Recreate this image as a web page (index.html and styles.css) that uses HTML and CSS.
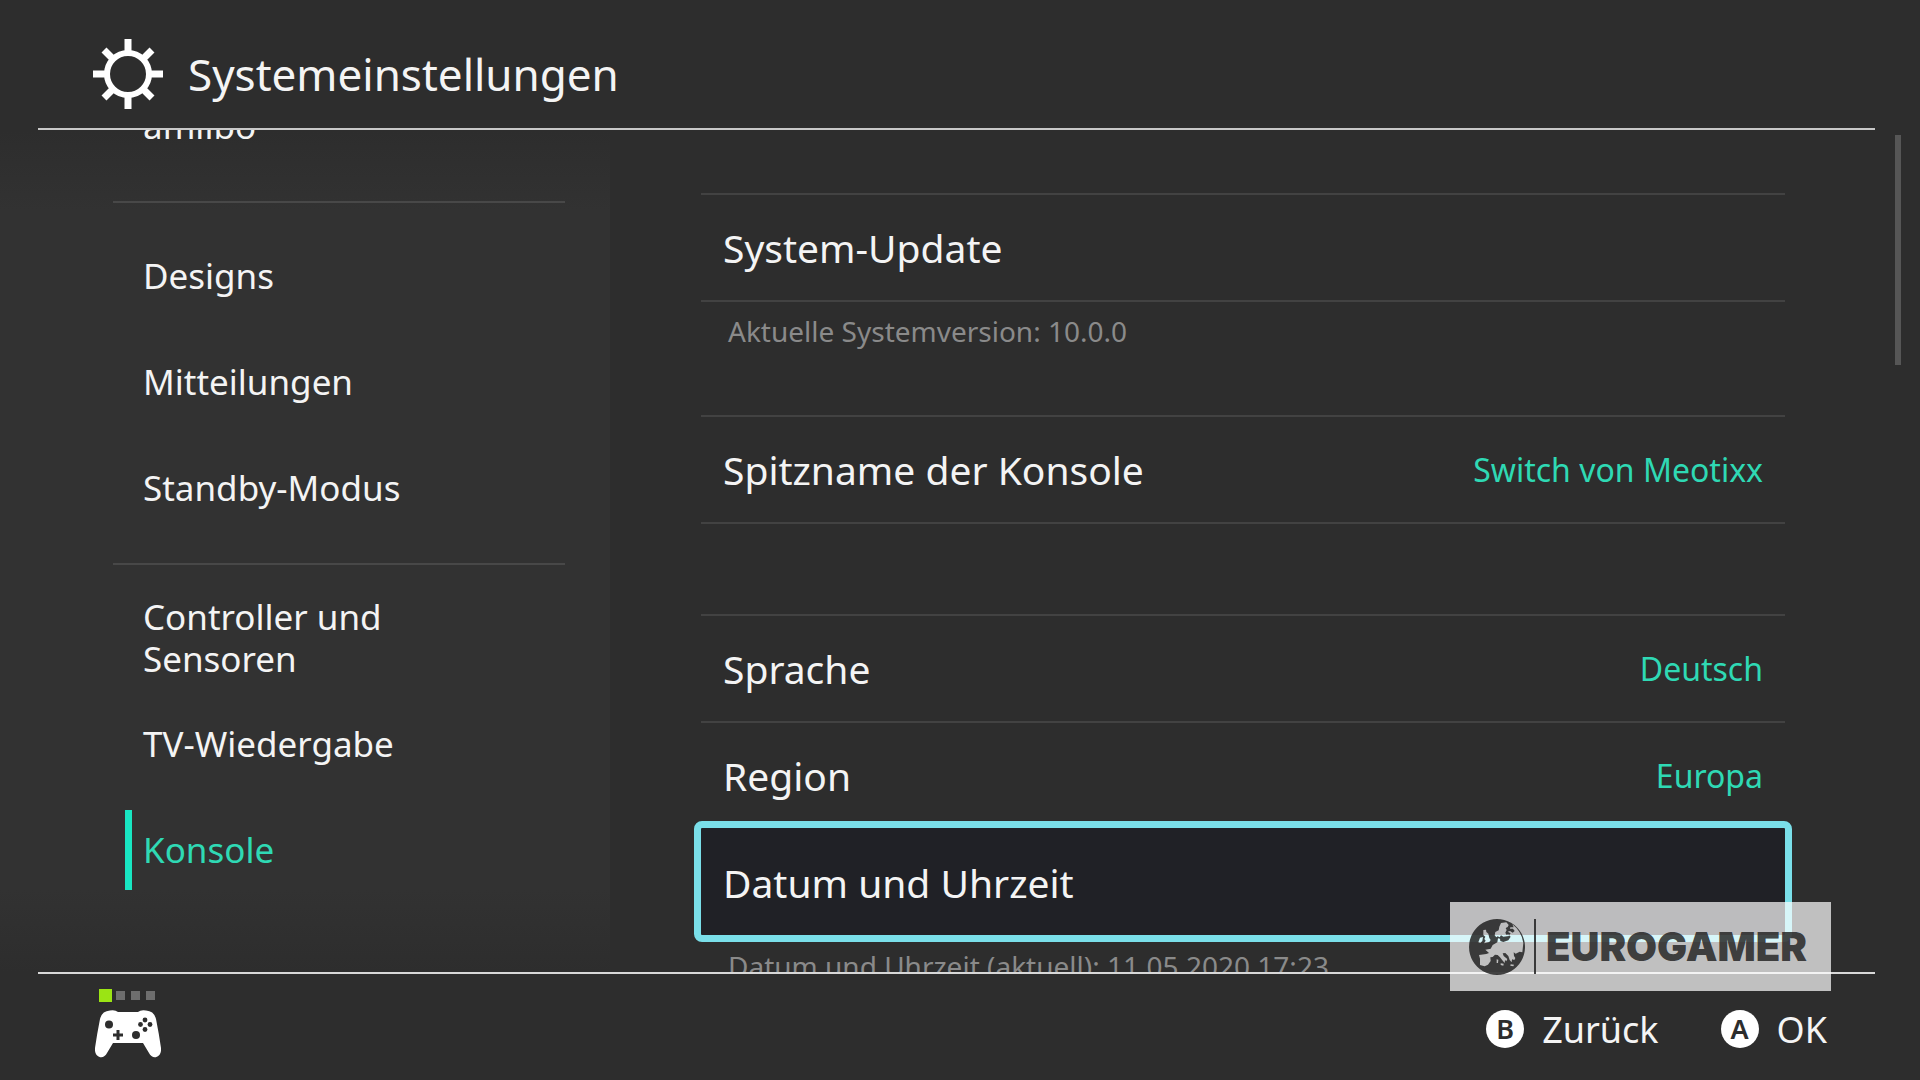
FILE: index.html
```html
<!DOCTYPE html>
<html lang="de">

<head>
    <meta charset="UTF-8">
    <meta name="viewport" content="width=device-width, initial-scale=1.0">
    <title>Systemeinstellungen</title>
    <link rel="stylesheet" href="styles.css">
</head>

<body>
    <header class="header">
        <svg class="gear" viewBox="-35 -35 70 70" aria-hidden="true">
            <circle r="21" fill="none" stroke="#fff" stroke-width="6"/>
            <g stroke="#fff" stroke-width="7">
                <path d="M0-35V-22M0 35V22M-35 0H-22M35 0H22"/>
                <path d="M-24-24L-16-16M24-24L16-16M-24 24L-16 16M24 24L16 16"/>
            </g>
        </svg>
        <h1>Systemeinstellungen</h1>
    </header>

    <div class="content">
        <nav class="sidebar">
            <div class="menu">
                <a href="#amiibo">amiibo</a>
                <hr>
                <a href="#designs">Designs</a>
                <a href="#mitteilungen">Mitteilungen</a>
                <a href="#standby">Standby-Modus</a>
                <hr>
                <a href="#controller">Controller und Sensoren</a>
                <a href="#tv">TV-Wiedergabe</a>
                <a href="#konsole" class="active">Konsole</a>
            </div>
        </nav>

        <main class="settings">
            <section class="group">
                <button class="row">System-Update</button>
            </section>
            <p class="note">Aktuelle Systemversion: 10.0.0</p>

            <section class="group">
                <button class="row">Spitzname der Konsole <span class="value">Switch von Meotixx</span></button>
            </section>

            <section class="group">
                <button class="row">Sprache <span class="value">Deutsch</span></button>
                <button class="row">Region <span class="value">Europa</span></button>
                <button class="row selected">Datum und Uhrzeit</button>
            </section>
            <p class="note">Datum und Uhrzeit (aktuell): 11.05.2020 17:23</p>
        </main>
        <div class="scrollbar"></div>
    </div>

    <footer class="footer">
        <div class="player">
            <div class="leds"><i class="on"></i><i></i><i></i><i></i></div>
            <svg class="pad" viewBox="0 0 66 48" aria-hidden="true">
                <path fill="#fff" d="M15 0.5Q20-0.5 23 2H43Q46-0.5 51 0.5Q59 1 61 9Q64 24 66 38C67 48 57 50 54 43L48 33H18L12 43C9 50-1 48 0 38Q2 24 5 9Q7 1 15 0.5Z"/>
                <g fill="#2d2d2d">
                    <circle cx="14" cy="14.500" r="4"/>
                    <circle cx="41" cy="25" r="4"/>
                    <circle cx="50" cy="10" r="2.400"/>
                    <circle cx="50" cy="19.500" r="2.400"/>
                    <circle cx="45.500" cy="14.500" r="2.400"/>
                    <circle cx="55" cy="14.500" r="2.400"/>
                    <path d="M21.500 20h3v3.500h3.500v3h-3.500v3.500h-3v-3.500h-3.500v-3h3.500z"/>
                </g>
            </svg>
        </div>
        <div class="actions">
            <button><span class="key">B</span>Zurück</button>
            <button><span class="key">A</span>OK</button>
        </div>
    </footer>

    <div class="watermark">
        <svg class="globe" viewBox="87 55 168 168" aria-hidden="true">
            <path fill="currentColor" fill-rule="evenodd" d="M171 55a84 84 0 1 0 .1 0z
                M183 67L199 65L206 73L203 79L197 82L200 88L196 96L199 102L206 101L207 106L190 108L183 104L179 110L173 107L169 110L164 104L166 94L176 89L178 78z
                M130 88L138 87L139 94L145 99L148 112L152 118L148 124L132 128L137 120L133 115L136 108L130 103z
                M120 111L129 109L127 121L121 127L115 125z
                M217 71Q245 92 250 127L247 155L239 153L227 159L221 155L222 166L226 172L223 178L216 176L215 185L209 178L205 166L196 157L188 158L191 166L202 175L199 182L195 178L194 187L187 179L180 170L173 163L165 162L158 169L151 170L152 181L144 192L134 197L120 193L120 174L117 163L139 160L147 157L136 147L152 144L158 133L172 125L174 113L180 114L181 121L190 124L205 119L212 108L207 104L212 98L203 93L210 91L218 96L224 91L219 84L210 84L211 80L221 80z
                M170 176L175 177L174 187L170 187z
                M182 188L191 189L190 195L182 193z
                M212 191L222 192L220 197L211 195z"/>
        </svg>
        <span class="brand">EUROGAMER</span>
    </div>
</body>

</html>
```

FILE: styles.css
```css
* {
    box-sizing: border-box;
}

body {
    margin: 0;
    height: 100vh;
    display: flex;
    flex-direction: column;
    overflow: hidden;
    background: #2d2d2d;
    color: #f4f4f4;
    font-family: "Noto Sans", "Open Sans", sans-serif;
}

button {
    border: 0;
    padding: 0;
    background: none;
    color: inherit;
    font: inherit;
    text-align: left;
}

.header {
    flex: none;
    height: 130px;
    margin: 0 45px 0 38px;
    padding: 20px 55px 0;
    display: flex;
    align-items: center;
    gap: 25px;
    border-bottom: 2px solid #c8c8c8;
}

.header h1 {
    margin: 0;
    font-size: 44px;
    font-weight: 400;
    line-height: 60px;
}

.gear {
    width: 70px;
    height: 70px;
}

.content {
    flex: 1;
    min-height: 0;
    display: flex;
    overflow: hidden;
}

.sidebar {
    flex: none;
    width: 610px;
    padding: 0 45px 0 113px;
    background: linear-gradient(#2d2d2d, #323232 80px, #323232 760px, #2d2d2d);
}

/* list is scrolled down a bit */
.menu {
    margin-top: -57px;
}

.menu a {
    display: flex;
    align-items: center;
    height: 106px;
    padding: 0 100px 0 30px;
    color: inherit;
    font-size: 35px;
    line-height: 42px;
    text-decoration: none;
}

.menu hr {
    margin: 22px 0 20px;
    border: 0;
    border-top: 2px solid #484848;
}

.menu .active {
    position: relative;
    color: #2fd9b4;
}

.menu .active::before {
    content: "";
    position: absolute;
    left: 12px;
    top: 13px;
    bottom: 13px;
    width: 7px;
    background: #18e6c2;
}

.settings {
    flex: 1;
    padding: 63px 110px 0 91px;
}

.group {
    border-bottom: 2px solid #424242;
    margin-bottom: 90px;
}

.row {
    width: 100%;
    height: 107px;
    padding: 0 22px;
    display: flex;
    align-items: center;
    justify-content: space-between;
    border-top: 2px solid #424242;
    font-size: 39px;
}

.value {
    color: #2fd9b4;
    font-size: 32px;
}

.selected {
    border-color: #202126;
    border-radius: 1px;
    background: #202126;
    outline: 7px solid #7adfe9;
}

.note {
    height: 60px;
    margin: -90px 0 53px;
    padding: 10px 27px 0;
    color: #8a8a8a;
    font-size: 28px;
    line-height: 38px;
}

.scrollbar {
    flex: none;
    width: 6px;
    height: 230px;
    margin: 5px 19px 0 0;
    background: #565656;
}

.footer {
    flex: none;
    height: 108px;
    margin: 0 45px 0 38px;
    padding: 15px 48px 0 57px;
    display: flex;
    justify-content: space-between;
    border-top: 2px solid #d8d8d8;
}

.leds {
    display: flex;
    align-items: center;
    gap: 6px;
    height: 13px;
    margin: 0 4px 8px;
}

.leds i {
    width: 9px;
    height: 9px;
    background: #6e6e6e;
}

.leds .on {
    width: 13px;
    height: 13px;
    margin-right: -2px;
    background: #9be414;
}

.pad {
    display: block;
    width: 66px;
    height: 48px;
}

.actions {
    display: flex;
    gap: 62px;
    height: 80px;
}

.actions button {
    display: flex;
    align-items: center;
    gap: 18px;
    font-size: 36px;
}

.key {
    width: 38px;
    height: 38px;
    border-radius: 50%;
    background: #fff;
    color: #2d2d2d;
    font-size: 27px;
    font-weight: 600;
    line-height: 38px;
    text-align: center;
}

.watermark {
    position: absolute;
    right: 89px;
    bottom: 89px;
    width: 381px;
    height: 89px;
    padding-left: 19px;
    display: flex;
    align-items: center;
    background: rgba(255, 255, 255, 0.7);
    color: rgba(32, 32, 32, 0.84);
}

.globe {
    width: 56px;
    height: 56px;
}

.brand {
    margin-left: 9px;
    padding-left: 10px;
    border-left: 2px solid;
    font-family: Inter, sans-serif;
    font-size: 40px;
    font-weight: 900;
    line-height: 55px;
}
```
